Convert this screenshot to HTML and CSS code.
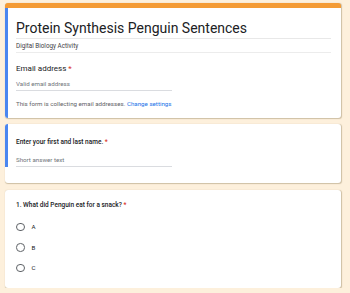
FILE: index.html
```html
<!DOCTYPE html>
<html>
<head>
<meta charset="utf-8">
<link rel="stylesheet" href="styles.css">
</head>
<body>
<div class="page">
  <div class="card header-card">
    <div class="inner focused">
      <div class="form-title">Protein Synthesis Penguin Sentences</div>
      <div class="form-desc">Digital Biology Activity</div>
      <div class="email-title">Email address <span class="req">*</span></div>
      <div class="input email-input">Valid email address</div>
      <div class="note">This form is collecting email addresses. <span class="link">Change settings</span></div>
    </div>
  </div>
  <div class="card q-card">
    <div class="inner focused">
      <div class="q-title">Enter your first and last name. <span class="req">*</span></div>
      <div class="input short-input">Short answer text</div>
    </div>
  </div>
  <div class="card q-card last">
    <div class="inner plain">
      <div class="q-title mc-title">1. What did Penguin eat for a snack? <span class="req">*</span></div>
      <div class="options">
        <div class="option"><span class="radio"></span><span class="opt-label">A</span></div>
        <div class="option"><span class="radio"></span><span class="opt-label">B</span></div>
        <div class="option"><span class="radio"></span><span class="opt-label">C</span></div>
      </div>
    </div>
  </div>
</div>
</body>
</html>
```
FILE: styles.css
```css
html, body {
  margin: 0;
  padding: 0;
  background: #fdf0dc;
  font-family: Roboto, "Liberation Sans", Arial, sans-serif;
  color: #202124;
}
.page {
  width: 336px;
  padding: 3px 0 0 5px;
  display: flex;
  flex-direction: column;
  gap: 6px;
}
.card {
  background: #fff;
  border-radius: 3px;
  box-shadow: 0.5px 0.5px 1px rgba(120, 100, 60, 0.35);
  overflow: hidden;
}
.header-card {
  border-top: 5px solid #f49b34;
}
.q-card.last {
  margin-top: 1px;
}
.inner {
  padding-right: 10px;
}
.focused {
  border-left: 3px solid #4a86f0;
  padding-left: 8px;
}
.plain {
  padding-left: 11px;
}
.form-title {
  font-size: 14px;
  line-height: 20px;
  padding-top: 10px;
  border-bottom: 1px solid #e8e8e8;
  color: #202124;
}
.form-desc {
  font-size: 6.3px;
  line-height: 11px;
  padding-top: 2px;
  border-bottom: 1px solid #ececec;
  color: #3c4043;
}
.email-title {
  font-size: 8px;
  line-height: 13px;
  padding-top: 9px;
}
.req {
  color: #d93025;
}
.input {
  font-size: 6.2px;
  line-height: 12px;
  color: #70757a;
  border-bottom: 1px solid #dadce0;
  width: 156px;
}
.email-input {
  margin-top: 3px;
}
.note {
  font-size: 6.2px;
  line-height: 10px;
  margin-top: 8px;
  padding-bottom: 9px;
  color: #5f6368;
}
.link {
  color: #1a73e8;
}
.q-title {
  font-size: 6.5px;
  line-height: 10px;
  padding-top: 13px;
  font-weight: 500;
}
.mc-title {
  padding-top: 10px;
}
.short-input {
  margin-top: 7px;
  margin-bottom: 16px;
}
.options {
  display: flex;
  flex-direction: column;
  padding-top: 12px;
  padding-bottom: 15px;
  gap: 10.5px;
}
.option {
  display: flex;
  align-items: center;
  gap: 7px;
  height: 10px;
}
.radio {
  width: 6.5px;
  height: 6.5px;
  border: 1px solid #5f6368;
  border-radius: 50%;
}
.opt-label {
  font-size: 6.2px;
  line-height: 10px;
}
```
